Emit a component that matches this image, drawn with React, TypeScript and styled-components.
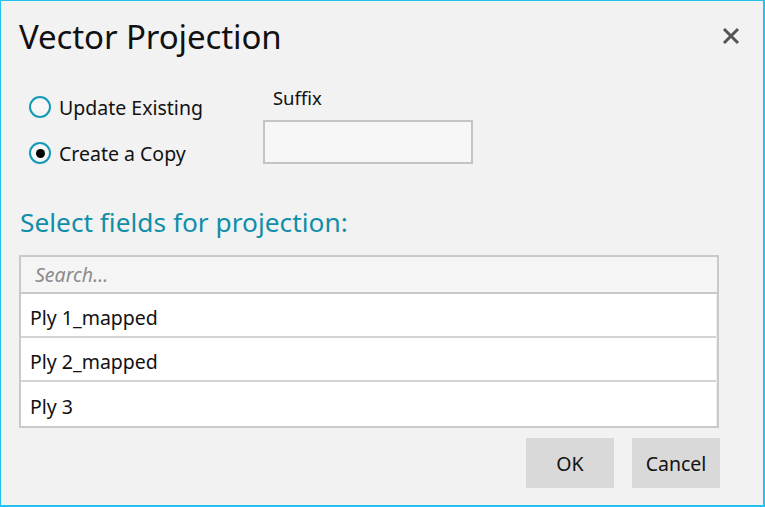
import React, { useState } from "react";
import styled, { createGlobalStyle } from "styled-components";

const GlobalStyle = createGlobalStyle`
  html, body {
    margin: 0;
    padding: 0;
    background: #ffffff;
  }
  body {
    font-family: "Noto Sans", "Open Sans", sans-serif;
    color: #111;
  }
`;

const Window = styled.div`
  box-sizing: border-box;
  width: 765px;
  height: 507px;
  background: #f2f2f2;
  border: 1px solid #22c4ee;
  border-right-width: 2px;
  border-bottom-width: 2px;
  padding: 0 44px 0 18px;
  display: flex;
  flex-direction: column;
  position: relative;
`;

const Header = styled.div`
  display: flex;
  align-items: center;
  justify-content: space-between;
  height: 70px;
`;

const Title = styled.h1`
  margin: 0;
  font-weight: 400;
  font-size: 33px;
  letter-spacing: -0.1px;
`;

const CloseButton = styled.button`
  position: absolute;
  top: 24px;
  right: 21px;
  width: 22px;
  height: 22px;
  padding: 0;
  border: none;
  background: transparent;
  display: flex;
  align-items: center;
  justify-content: center;
  cursor: pointer;
`;

const OptionsRow = styled.div`
  display: flex;
  gap: 60px;
  margin-top: 14px;
`;

const RadioGroup = styled.div`
  display: flex;
  flex-direction: column;
  gap: 22px;
  padding-left: 10px;
  padding-top: 10px;
`;

const RadioLabel = styled.label`
  display: flex;
  align-items: center;
  gap: 8px;
  font-size: 19.5px;
  height: 24px;
  cursor: pointer;
`;

const RadioCircle = styled.span<{ checked: boolean }>`
  box-sizing: border-box;
  width: 22px;
  height: 22px;
  border-radius: 50%;
  border: 2.5px solid #1299b6;
  background: #f6f6f6;
  display: flex;
  align-items: center;
  justify-content: center;
  &::after {
    content: "";
    display: ${({ checked }) => (checked ? "block" : "none")};
    width: 9px;
    height: 9px;
    border-radius: 50%;
    background: #000;
  }
`;

const SuffixColumn = styled.div`
  display: flex;
  flex-direction: column;
`;

const SuffixLabel = styled.div`
  font-size: 18.5px;
  padding-left: 10px;
  height: 26px;
  line-height: 26px;
`;

const SuffixInput = styled.input`
  box-sizing: border-box;
  width: 210px;
  height: 44px;
  margin-top: 9px;
  border: 2px solid #c4c4c4;
  background: #f7f7f7;
  font-family: inherit;
  font-size: 18px;
  padding: 0 8px;
  outline: none;
`;

const SectionTitle = styled.h2`
  margin: 40px 0 0 1px;
  font-weight: 400;
  font-size: 26.3px;
  color: #118ea9;
  height: 34px;
  line-height: 34px;
`;

const FieldList = styled.div`
  box-sizing: border-box;
  margin-top: 16px;
  width: 700px;
  border: 2px solid #c9c9c9;
  background: #efefef;
  display: flex;
  flex-direction: column;
`;

const SearchInput = styled.input`
  box-sizing: border-box;
  height: 37px;
  border: none;
  border-bottom: 2px solid #c8c8c8;
  background: #f5f5f5;
  font-family: inherit;
  font-size: 19.5px;
  padding: 0 14px;
  outline: none;
  &::placeholder {
    font-style: italic;
    color: #8c8c8c;
  }
`;

const FieldRow = styled.div`
  box-sizing: border-box;
  height: 44px;
  background: #ffffff;
  border-bottom: 2px solid #d3d3d3;
  margin-right: 1px;
  display: flex;
  align-items: center;
  padding: 5px 0 0 9px;
  font-size: 19.5px;
  &:last-child {
    border-bottom: none;
  }
`;

const Footer = styled.div`
  display: flex;
  justify-content: flex-end;
  gap: 18px;
  margin-top: 10px;
  width: 701px;
`;

const DialogButton = styled.button`
  width: 88px;
  height: 50px;
  border: none;
  background: #d9d9d9;
  font-family: inherit;
  font-size: 19.5px;
  color: #111;
  cursor: pointer;
`;

const fields = ["Ply 1_mapped", "Ply 2_mapped", "Ply 3"];

export default function App() {
  const [mode, setMode] = useState<"update" | "copy">("copy");

  return (
    <>
      <GlobalStyle />
      <Window>
        <Header>
          <Title>Vector Projection</Title>
        </Header>
        <CloseButton aria-label="Close">
          <svg width="18" height="18" viewBox="0 0 18 18">
            <path d="M2 2 L16 16 M16 2 L2 16" stroke="#555" strokeWidth="3" />
          </svg>
        </CloseButton>

        <OptionsRow>
          <RadioGroup>
            <RadioLabel onClick={() => setMode("update")}>
              <RadioCircle checked={mode === "update"} />
              Update Existing
            </RadioLabel>
            <RadioLabel onClick={() => setMode("copy")}>
              <RadioCircle checked={mode === "copy"} />
              Create a Copy
            </RadioLabel>
          </RadioGroup>
          <SuffixColumn>
            <SuffixLabel>Suffix</SuffixLabel>
            <SuffixInput />
          </SuffixColumn>
        </OptionsRow>

        <SectionTitle>Select fields for projection:</SectionTitle>

        <FieldList>
          <SearchInput placeholder="Search..." />
          {fields.map((f) => (
            <FieldRow key={f}>{f}</FieldRow>
          ))}
        </FieldList>

        <Footer>
          <DialogButton>OK</DialogButton>
          <DialogButton>Cancel</DialogButton>
        </Footer>
      </Window>
    </>
  );
}
